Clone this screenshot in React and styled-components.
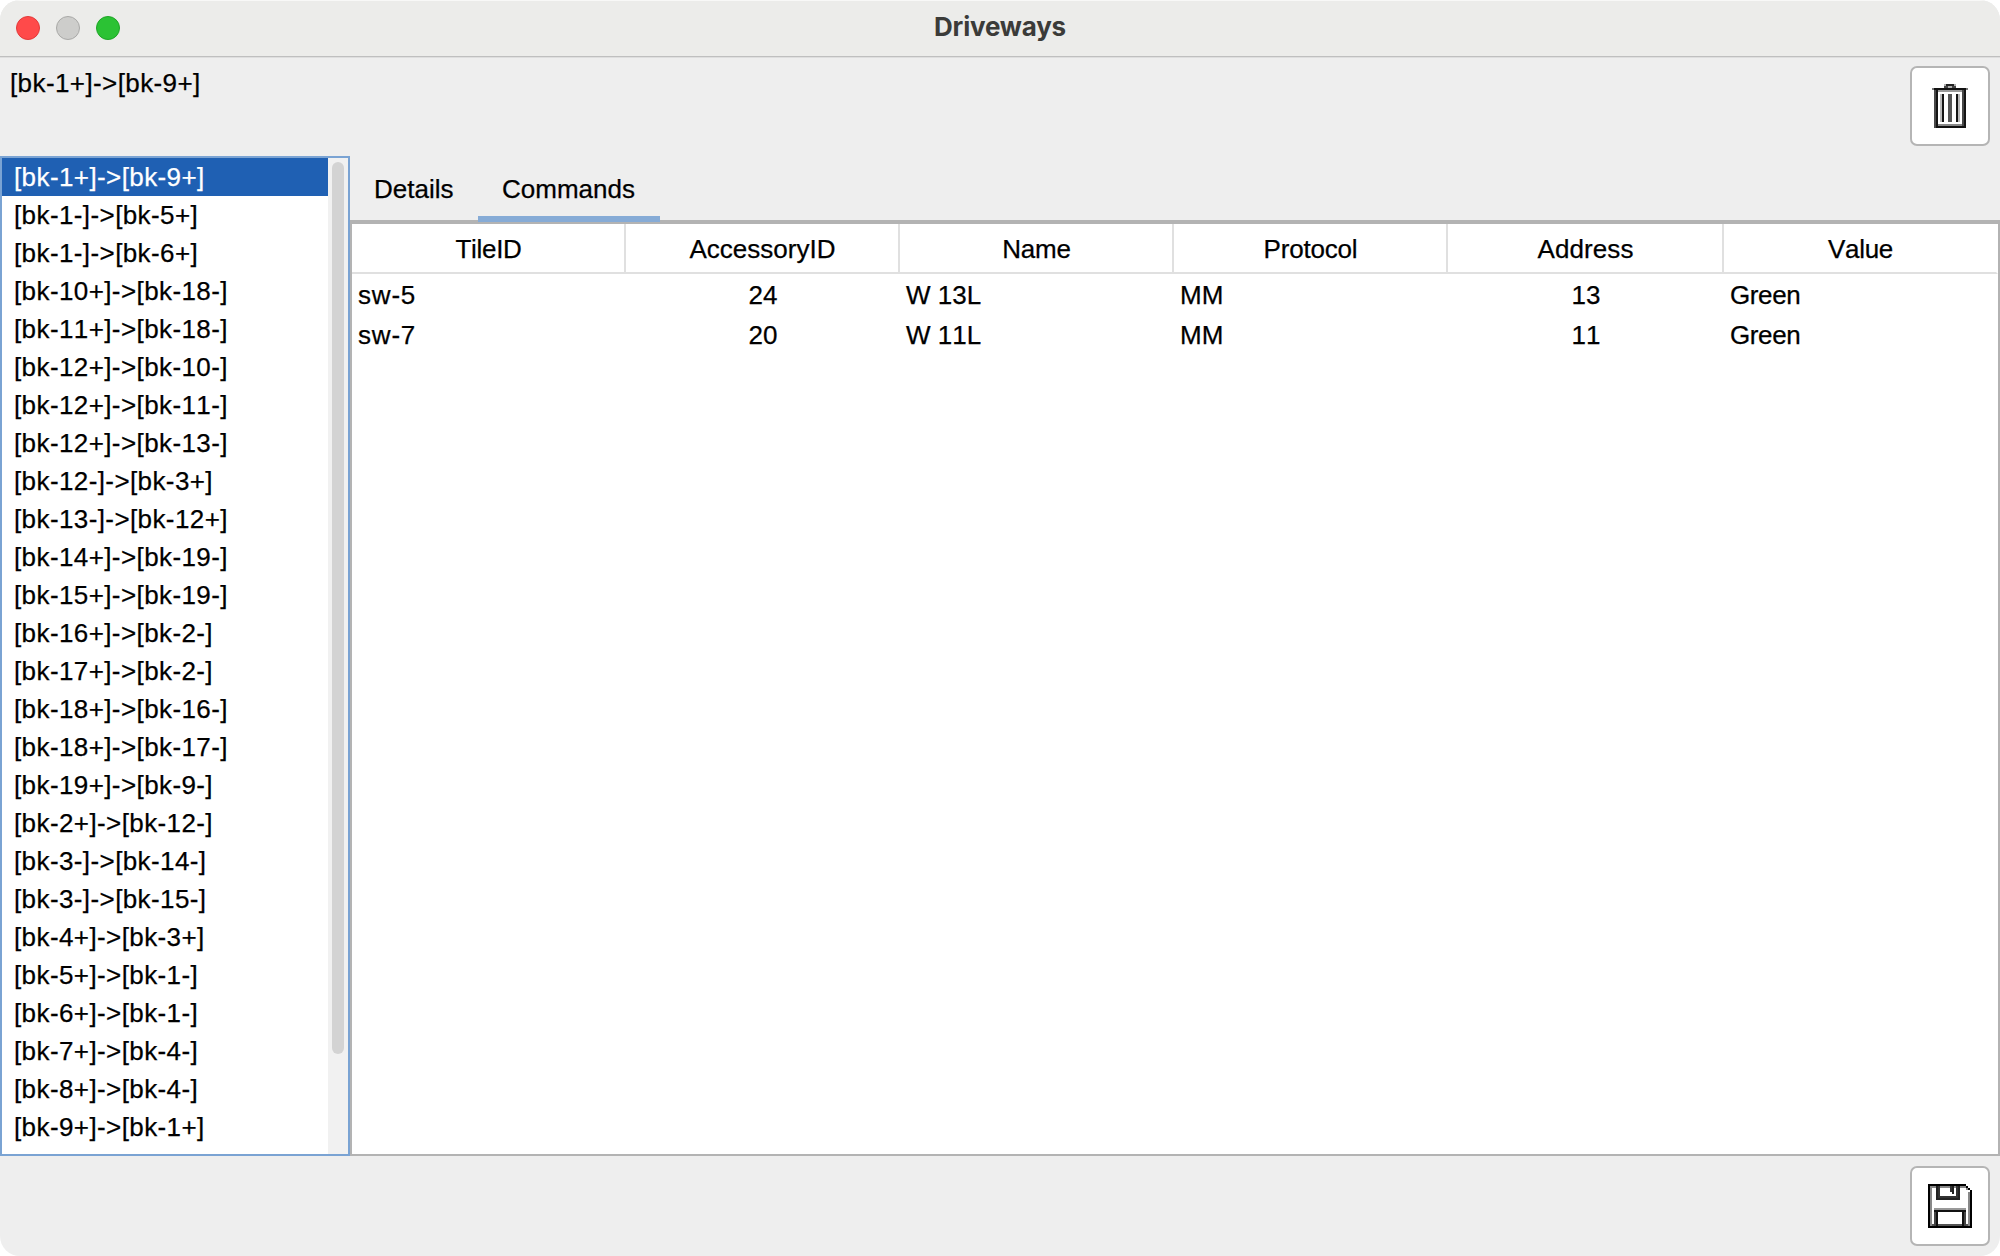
import React from "react";
import styled, { createGlobalStyle } from "styled-components";

const Global = createGlobalStyle`
  *, *::before, *::after { box-sizing: border-box; }
  body { margin: 0; background: #fff; }
`;

const Window = styled.div`
  display: flex;
  flex-direction: column;
  width: 2000px;
  height: 1256px;
  overflow: hidden;
  border-radius: 20px;
  background: #eeeeee;
  color: #000;
  font: 26px "Liberation Sans", Arial, sans-serif;
  font-kerning: none;
  -webkit-text-stroke: 0.25px currentColor;
  white-space: nowrap;
`;

const TitleBar = styled.header`
  display: grid;
  grid-template-columns: 1fr auto 1fr;
  align-items: center;
  flex: none;
  height: 58px;
  padding: 0 16px 1px;
  background: #ececea;
  border-bottom: 1px solid #dedede;
  box-shadow: inset 0 1px #f8f8f7, inset 0 -1px #bfbfbf;
`;

const Lights = styled.div`
  display: flex;
  gap: 16px;
`;

const Light = styled.span`
  width: 24px;
  height: 24px;
  border-radius: 50%;
  background: ${(p) => p.$fill};
  border: 1px solid ${(p) => p.$rim};
`;

const Title = styled.h1`
  margin: 0;
  padding-bottom: 2px;
  font: 700 26px/32px Inter, sans-serif;
  letter-spacing: -0.2px;
  -webkit-text-stroke: 0;
  color: #3b3b39;
`;

const TopPanel = styled.div`
  display: flex;
  justify-content: space-between;
  flex: none;
  height: 98px;
  padding: 8px 10px;
`;

const RouteLabel = styled.span`
  padding-top: 2px;
  line-height: 30px;
  letter-spacing: 0.4px;
`;

const IconButton = styled.button`
  display: flex;
  align-items: center;
  justify-content: center;
  width: 80px;
  height: 80px;
  padding: 0;
  border: 2px solid #b5b5b5;
  border-radius: 7px;
  background: #fff;
`;

const Main = styled.main`
  display: flex;
  flex: none;
  height: 1000px;
`;

const RoutePane = styled.aside`
  display: flex;
  width: 350px;
  border: 2px solid #7aa3d3;
  background: #fff;
`;

const RouteList = styled.ul`
  flex: 1;
  margin: 0;
  padding: 0;
  list-style: none;
`;

const Route = styled.li`
  height: 38px;
  padding-left: 12px;
  line-height: 38px;
  letter-spacing: 0.4px;
  color: ${(p) => (p.$selected ? "#fff" : "#000")};
  background: ${(p) => (p.$selected ? "#1f60b3" : "transparent")};
`;

const Track = styled.div`
  width: 20px;
  padding: 4px;
  background: #f1f1f1;
`;

const Thumb = styled.div`
  height: 892px;
  border-radius: 6px;
  background: #d3d3d3;
`;

const Content = styled.section`
  display: flex;
  flex-direction: column;
  flex: 1;
`;

const Tabs = styled.nav`
  display: flex;
  height: 68px;
  border-bottom: 4px solid #b3b3b3;
`;

const Tab = styled.span`
  width: ${(p) => p.$width}px;
  height: 66px;
  padding-left: 24px;
  line-height: 66px;
  border-bottom: ${(p) => (p.$active ? "6px solid #86abd6" : "0")};
`;

const Table = styled.div`
  flex: 1;
  border: 2px solid #b3b3b3;
  border-top: 0;
  background: #fff;
`;

const Row = styled.div`
  display: grid;
  grid-template-columns: repeat(4, 274px) 276px 274px;
`;

const HeadCell = styled.div`
  height: 50px;
  padding-left: 1px;
  line-height: 50px;
  text-align: center;
  letter-spacing: ${(p) => p.$track}px;
  border-bottom: 2px solid #e0e0e0;
  border-right: 2px solid #e0e0e0;
  &:last-child { border-right-color: transparent; }
`;

const Cell = styled.div`
  height: 40px;
  padding: 0 6px;
  line-height: 42px;
  letter-spacing: ${(p) => p.$track}px;
  text-align: ${(p) => (p.$center ? "center" : "left")};
`;

const BottomPanel = styled.footer`
  display: flex;
  justify-content: flex-end;
  flex: 1;
  padding: 10px;
`;

const routes = [
  "[bk-1+]->[bk-9+]", "[bk-1-]->[bk-5+]", "[bk-1-]->[bk-6+]", "[bk-10+]->[bk-18-]",
  "[bk-11+]->[bk-18-]", "[bk-12+]->[bk-10-]", "[bk-12+]->[bk-11-]", "[bk-12+]->[bk-13-]",
  "[bk-12-]->[bk-3+]", "[bk-13-]->[bk-12+]", "[bk-14+]->[bk-19-]", "[bk-15+]->[bk-19-]",
  "[bk-16+]->[bk-2-]", "[bk-17+]->[bk-2-]", "[bk-18+]->[bk-16-]", "[bk-18+]->[bk-17-]",
  "[bk-19+]->[bk-9-]", "[bk-2+]->[bk-12-]", "[bk-3-]->[bk-14-]", "[bk-3-]->[bk-15-]",
  "[bk-4+]->[bk-3+]", "[bk-5+]->[bk-1-]", "[bk-6+]->[bk-1-]", "[bk-7+]->[bk-4-]",
  "[bk-8+]->[bk-4-]", "[bk-9+]->[bk-1+]",
];

const columns = [
  { name: "TileID", headTrack: -0.3, track: 0.8 },
  { name: "AccessoryID", headTrack: 0, track: 0, center: true },
  { name: "Name", headTrack: -0.2, track: 0 },
  { name: "Protocol", headTrack: -0.2, track: 0 },
  { name: "Address", headTrack: 0.1, track: 0, center: true },
  { name: "Value", headTrack: -0.3, track: -0.4 },
];

const commands = [
  ["sw-5", "24", "W 13L", "MM", "13", "Green"],
  ["sw-7", "20", "W 11L", "MM", "11", "Green"],
];

const TrashIcon = () => (
  <svg width="48" height="52" viewBox="0 0 48 52" shapeRendering="crispEdges">
    <path d="M20 4H28V6H20Z" fill="#222" />
    <path d="M18 4H20V6H18ZM28 4H30V6H28ZM22 6H26V8H22Z" fill="#b0b0b0" />
    <path d="M18 6H22V8H18ZM26 6H30V8H26Z" fill="#444" />
    <path d="M8 8H40V10H8Z" fill="#111" />
    <path d="M6 8H8V10H6ZM40 8H42V10H40Z" fill="#777" />
    <path d="M12 10H36V12H12Z" fill="#999" />
    <path d="M8 10H10V48H8ZM36 10H38V46H36Z" fill="#484848" />
    <path d="M10 10H12V48H10ZM38 10H40V48H38Z" fill="#151515" />
    <path d="M12 44H36V46H12Z" fill="#888" />
    <path d="M10 46H38V48H10Z" fill="#111" />
    <path d="M14 14H16V42H14ZM32 14H34V42H32Z" fill="#bbb" />
    <path d="M16 14H18V42H16ZM30 14H32V42H30Z" fill="#151515" />
    <path d="M22 14H26V42H22Z" fill="#555" />
  </svg>
);

const SaveIcon = () => (
  <svg width="52" height="52" viewBox="0 0 52 52" shapeRendering="crispEdges">
    <path d="M6 6H42V8H6ZM6 8H8V46H6ZM44 12H46V46H44ZM42 8H44V10H42Z" fill="#888" />
    <path d="M8 44H44V46H8Z" fill="#555" />
    <path d="M4 4H42V6H4ZM4 4H6V48H4ZM4 46H48V48H4ZM46 10H48V48H46ZM42 6H44V8H42ZM44 8H46V10H44Z" fill="#000" />
    <path d="M14 6H16V18H14ZM16 16H32V18H16ZM32 6H34V18H32ZM26 6H28V12H26Z" fill="#333" />
    <path d="M12 6H14V18H12ZM34 6H36V18H34ZM12 18H36V20H12ZM28 6H30V14H28Z" fill="#222" />
    <path d="M10 28H42V30H10Z" fill="#999" />
    <path d="M10 30H42V32H10ZM12 32H14V46H12ZM38 32H40V46H38Z" fill="#111" />
    <path d="M10 32H12V46H10ZM40 32H42V46H40Z" fill="#444" />
  </svg>
);

export default function App() {
  return (
    <Window>
      <Global />
      <TitleBar>
        <Lights>
          <Light $fill="#ff4a4a" $rim="#e23a3a" />
          <Light $fill="#cdcdcb" $rim="#a9a9a7" />
          <Light $fill="#2bc234" $rim="#1ea526" />
        </Lights>
        <Title>Driveways</Title>
      </TitleBar>
      <TopPanel>
        <RouteLabel>[bk-1+]-&gt;[bk-9+]</RouteLabel>
        <IconButton aria-label="Delete"><TrashIcon /></IconButton>
      </TopPanel>
      <Main>
        <RoutePane>
          <RouteList>
            {routes.map((r, i) => <Route key={r} $selected={i === 0}>{r}</Route>)}
          </RouteList>
          <Track><Thumb /></Track>
        </RoutePane>
        <Content>
          <Tabs>
            <Tab $width={128}>Details</Tab>
            <Tab $width={182} $active>Commands</Tab>
          </Tabs>
          <Table>
            <Row>
              {columns.map((c) => <HeadCell key={c.name} $track={c.headTrack}>{c.name}</HeadCell>)}
            </Row>
            {commands.map((row) => (
              <Row key={row[0]}>
                {row.map((v, i) => (
                  <Cell key={i} $center={columns[i].center} $track={columns[i].track}>{v}</Cell>
                ))}
              </Row>
            ))}
          </Table>
        </Content>
      </Main>
      <BottomPanel>
        <IconButton aria-label="Save"><SaveIcon /></IconButton>
      </BottomPanel>
    </Window>
  );
}
